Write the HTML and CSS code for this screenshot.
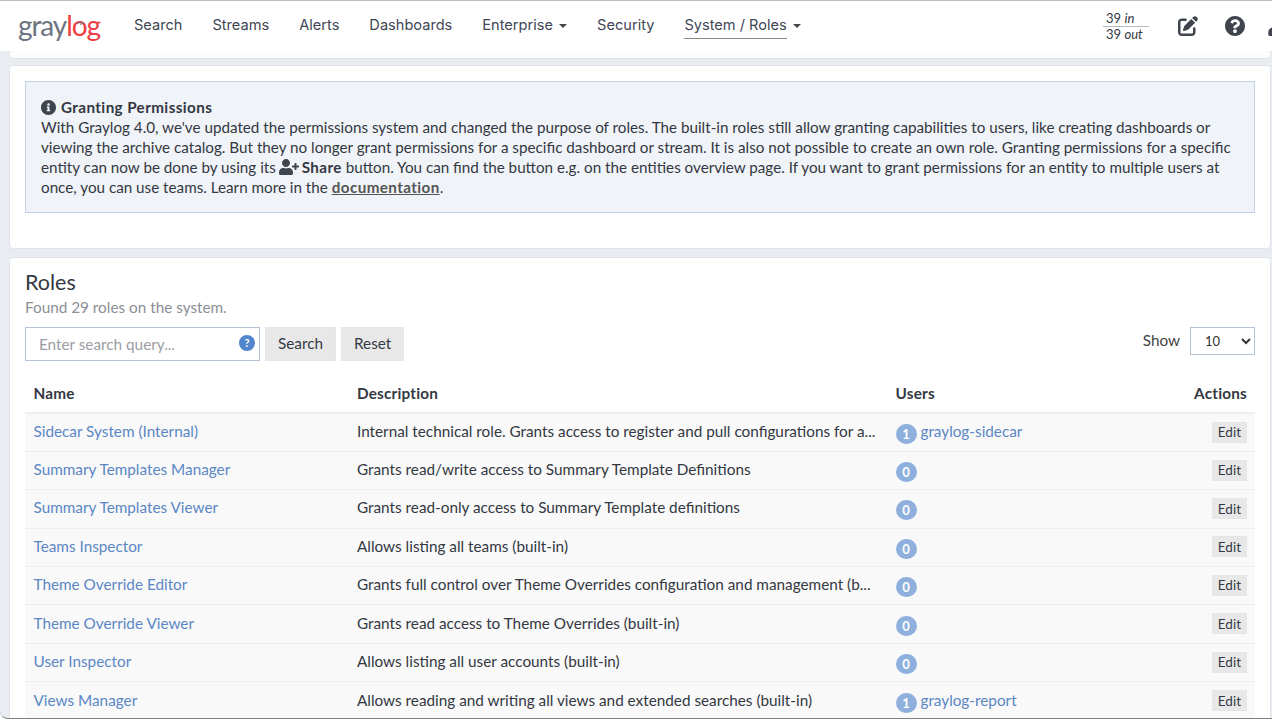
FILE: index.html
```html
<!DOCTYPE html>
<html lang="en">
<head>
<meta charset="utf-8">
<title>Roles - Graylog</title>
<link rel="stylesheet" href="styles.css">
</head>
<body>

<div class="app">
    <nav class="navbar">
        <a class="brand">gray<span class="brand_red">l<span class="brand_o">o<svg class="pulse" viewBox="0 0 12 8"><path d="M0 4.5h3l1.5-2 2 4 1.5-4 1 2h3"/></svg></span>g</span></a>
        <ul class="nav_links">
            <li>Search</li>
            <li>Streams</li>
            <li>Alerts</li>
            <li>Dashboards</li>
            <li>Enterprise <i class="caret"></i></li>
            <li>Security</li>
            <li><span class="active">System / Roles</span> <i class="caret"></i></li>
        </ul>
        <div class="nav_right">
            <div class="throughput">
                <div class="tp_in"><b>39</b> <em>in</em></div>
                <div><b>39</b> <em>out</em></div>
            </div>
            <svg class="nav_icon" viewBox="0 0 512 512"><path d="M471.6 21.7c-21.9-21.9-57.3-21.9-79.2 0L362.3 51.7l97.9 97.9 30.1-30.1c21.9-21.9 21.9-57.3 0-79.2L471.6 21.7zm-299.2 220c-6.1 6.1-10.8 13.6-13.5 21.9l-29.6 88.8c-2.9 8.6-.6 18.1 5.8 24.6s15.9 8.7 24.6 5.8l88.8-29.6c8.2-2.7 15.7-7.4 21.9-13.5L437.7 172.3 339.7 74.3 172.4 241.7zM96 64C43 64 0 107 0 160V416c0 53 43 96 96 96H352c53 0 96-43 96-96V320c0-17.7-14.3-32-32-32s-32 14.3-32 32v96c0 17.7-14.3 32-32 32H96c-17.7 0-32-14.3-32-32V160c0-17.7 14.3-32 32-32h96c17.7 0 32-14.3 32-32s-14.3-32-32-32H96z"/></svg>
            <svg class="nav_icon help_icon" viewBox="8 8 496 496"><path d="M504 256c0 136.997-111.043 248-248 248S8 392.997 8 256C8 119.083 119.043 8 256 8s248 111.083 248 248zM262.655 90c-54.497 0-89.255 22.957-116.549 63.758-3.536 5.286-2.353 12.415 2.715 16.258l34.699 26.31c5.205 3.947 12.621 3.008 16.665-2.122 17.864-22.658 30.113-35.797 57.303-35.797 20.429 0 45.698 13.148 45.698 32.958 0 14.976-12.363 22.667-32.534 33.976C247.128 238.528 216 254.941 216 296v4c0 6.627 5.373 12 12 12h56c6.627 0 12-5.373 12-12v-1.333c0-28.462 83.186-29.647 83.186-106.667 0-58.002-60.165-102-116.531-102zM256 338c-25.365 0-46 20.635-46 46 0 25.364 20.635 46 46 46s46-20.636 46-46c0-25.365-20.635-46-46-46z"/></svg>
            <svg class="nav_icon user_icon" viewBox="0 0 448 512"><path d="M224 256c70.7 0 128-57.3 128-128S294.7 0 224 0 96 57.3 96 128s57.3 128 128 128zm89.6 32h-16.7c-22.2 10.2-46.9 16-72.9 16s-50.6-5.8-72.9-16h-16.7C60.2 288 0 348.2 0 422.4V464c0 26.5 21.5 48 48 48h352c26.5 0 48-21.5 48-48v-41.6c0-74.2-60.2-134.4-134.4-134.4z"/></svg>
        </div>
    </nav>

    <div class="content">
        <div class="card card_stub"></div>

        <div class="card card_notice">
            <div class="alert">
                <div class="alert_title">
                    <svg class="info_icon" viewBox="8 8 496 496"><path d="M256 8C119.043 8 8 119.083 8 256c0 136.997 111.043 248 248 248s248-111.003 248-248C504 119.083 392.957 8 256 8zm0 110c23.196 0 42 18.804 42 42s-18.804 42-42 42-42-18.804-42-42 18.804-42 42-42zm56 254c0 6.627-5.373 12-12 12h-88c-6.627 0-12-5.373-12-12v-24c0-6.627 5.373-12 12-12h12v-64h-12c-6.627 0-12-5.373-12-12v-24c0-6.627 5.373-12 12-12h64c6.627 0 12 5.373 12 12v100h12c6.627 0 12 5.373 12 12v24z"/></svg>
                    <b>Granting Permissions</b>
                </div>
                With Graylog 4.0, we've updated the permissions system and changed the purpose of roles. The built-in roles still allow granting capabilities to users, like creating dashboards or<br>
                viewing the archive catalog. But they no longer grant permissions for a specific dashboard or stream. It is also not possible to create an own role. Granting permissions for a specific<br>
                entity can now be done by using its <svg class="share_icon" viewBox="0 0 640 512"><path d="M624 208h-64v-64c0-8.8-7.2-16-16-16h-32c-8.8 0-16 7.2-16 16v64h-64c-8.8 0-16 7.2-16 16v32c0 8.8 7.2 16 16 16h64v64c0 8.8 7.2 16 16 16h32c8.8 0 16-7.2 16-16v-64h64c8.8 0 16-7.2 16-16v-32c0-8.8-7.2-16-16-16zm-400 48c70.7 0 128-57.3 128-128S294.7 0 224 0 96 57.3 96 128s57.3 128 128 128zm89.6 32h-16.7c-22.2 10.2-46.9 16-72.9 16s-50.6-5.8-72.9-16h-16.7C60.2 288 0 348.2 0 422.4V464c0 26.5 21.5 48 48 48h352c26.5 0 48-21.5 48-48v-41.6c0-74.2-60.2-134.4-134.4-134.4z"/></svg> <b>Share</b> button. You can find the button e.g. on the entities overview page. If you want to grant permissions for an entity to multiple users at<br>
                once, you can use teams. Learn more in the <a class="doc_link">documentation</a>.
            </div>
        </div>

        <div class="card card_roles">
            <h2>Roles</h2>
            <p class="found">Found 29 roles on the system.</p>
            <div class="toolbar">
                <div class="search_box">
                    <input class="search_input" type="text" placeholder="Enter search query...">
                    <span class="search_help">?</span>
                </div>
                <button class="btn btn_search">Search</button>
                <button class="btn btn_reset">Reset</button>
                <label class="show_label">Show</label>
                <select class="show_select"><option>10</option></select>
            </div>

            <table class="roles_table">
                <thead>
                    <tr><th class="col_name">Name</th><th class="col_desc">Description</th><th class="col_users">Users</th><th class="col_actions">Actions</th></tr>
                </thead>
                <tbody>
                    <tr><td><a>Sidecar System (Internal)</a></td><td>Internal technical role. Grants access to register and pull configurations for a...</td><td><span class="badge">1</span> <a>graylog-sidecar</a></td><td class="col_actions"><button class="btn_edit">Edit</button></td></tr>
                    <tr><td><a>Summary Templates Manager</a></td><td>Grants read/write access to Summary Template Definitions</td><td><span class="badge">0</span></td><td class="col_actions"><button class="btn_edit">Edit</button></td></tr>
                    <tr><td><a>Summary Templates Viewer</a></td><td>Grants read-only access to Summary Template definitions</td><td><span class="badge">0</span></td><td class="col_actions"><button class="btn_edit">Edit</button></td></tr>
                    <tr><td><a>Teams Inspector</a></td><td>Allows listing all teams (built-in)</td><td><span class="badge">0</span></td><td class="col_actions"><button class="btn_edit">Edit</button></td></tr>
                    <tr><td><a>Theme Override Editor</a></td><td>Grants full control over Theme Overrides configuration and management (b...</td><td><span class="badge">0</span></td><td class="col_actions"><button class="btn_edit">Edit</button></td></tr>
                    <tr><td><a>Theme Override Viewer</a></td><td>Grants read access to Theme Overrides (built-in)</td><td><span class="badge">0</span></td><td class="col_actions"><button class="btn_edit">Edit</button></td></tr>
                    <tr><td><a>User Inspector</a></td><td>Allows listing all user accounts (built-in)</td><td><span class="badge">0</span></td><td class="col_actions"><button class="btn_edit">Edit</button></td></tr>
                    <tr><td><a>Views Manager</a></td><td>Allows reading and writing all views and extended searches (built-in)</td><td><span class="badge">1</span> <a>graylog-report</a></td><td class="col_actions"><button class="btn_edit">Edit</button></td></tr>
                </tbody>
            </table>
        </div>
    </div>
</div>

</body>
</html>
```

FILE: styles.css
```css
*,*:after,*:before{
	box-sizing: border-box;
}
html, body{
	height: 100%;
	overflow: hidden;
}
body{
	margin: 0;
	background: #fff;
	color: #333842;
	font-family: "Lato", "Liberation Sans", sans-serif;
	font-size: 15.3px;
	line-height: 20px;
}
a{
	color: #5b87c5;
}
.app{
	height: 719px;
	overflow: hidden;
	background: #e9ecf1;
	border-top: 1px solid #bdbdbd;
	border-bottom: 1px solid #808080;
	border-bottom-left-radius: 8px;
}

/* top bar */
.navbar{
	height: 50px;
	background: #fff;
	display: flex;
	align-items: center;
	padding-left: 18px;
	overflow: hidden;
}
.brand{
	width: 101px;
	flex: none;
	font-family: "Lato", sans-serif;
	font-size: 28px;
	letter-spacing: -1.1px;
	color: #6b7480;
	padding-bottom: 3px;
}
.brand_red{
	color: #ee3f45;
}
.brand_o{
	position: relative;
}
.pulse{
	position: absolute;
	left: 4px;
	top: 12px;
	width: 9px;
	height: 6px;
	fill: none;
	stroke: #6b7480;
	stroke-width: 1;
}
.nav_links{
	display: flex;
	list-style: none;
	margin: 0;
	padding: 2px 0 0;
	font-family: "Inter", sans-serif;
	font-size: 14.6px;
	color: #404654;
}
.nav_links li{
	padding: 0 15px;
	white-space: nowrap;
}
.active{
	display: inline-block;
	padding-bottom: 3px;
	border-bottom: 1px solid #888;
}
.caret{
	display: inline-block;
	border-top: 4px solid #444;
	border-left: 4px solid transparent;
	border-right: 4px solid transparent;
	margin-left: 2px;
	vertical-align: middle;
}
.nav_right{
	margin-left: auto;
	display: flex;
	align-items: center;
}
.throughput{
	width: 46px;
	font-size: 13px;
	line-height: 15px;
	margin-right: 29px;
	padding-left: 3px;
}
.throughput b{
	font-weight: 400;
}
.tp_in{
	margin-left: -3px;
	padding-left: 3px;
	border-bottom: 1px solid #b4b9c2;
}
.nav_icon{
	width: 20px;
	height: 20px;
	fill: #3f444d;
	flex: none;
}
.help_icon{
	margin-left: 27px;
}
.user_icon{
	margin-left: 23px;
	width: 18px;
	margin-right: -14px;
}

/* cards */
.content{
	padding: 0 1px 0 9px;
}
.card{
	background: #fff;
	border: 1px solid #dfe3ea;
	border-radius: 4px;
	margin-bottom: 8px;
}
.card_stub{
	height: 8px;
	border-top: 0;
	background: #fcfcfc;
	border-radius: 0 0 4px 4px;
	margin-bottom: 6px;
}
.card_notice{
	height: 184px;
	padding: 15px 15px 0 15px;
}
.alert{
	height: 132px;
	background: #f0f3f8;
	border: 1px solid #c3d2e6;
	padding: 15px;
	font-size: 15.22px;
	white-space: nowrap;
}
.alert_title{
	display: flex;
	align-items: center;
	gap: 5px;
}
.alert b{
	letter-spacing: 0.4px;
}
.info_icon{
	width: 15px;
	height: 15px;
	fill: #3f444d;
}
.share_icon{
	width: 20px;
	height: 16px;
	margin: 0 -1px 0 -1px;
	fill: #3f444d;
	vertical-align: -2px;
}
.doc_link{
	color: #555;
	font-weight: 700;
	letter-spacing: 0.4px;
	text-decoration: underline;
}

/* roles list */
.card_roles{
	padding: 0 15px;
	height: 480px;
}
h2{
	margin: 12px 0 0;
	font-size: 21.5px;
	font-weight: 400;
	line-height: 24px;
}
.found{
	margin: 3px 0 10px;
	color: #8c8f96;
}
.toolbar{
	display: flex;
	align-items: flex-start;
	height: 34px;
}
.search_box{
	width: 235px;
	height: 34px;
	border: 1px solid #b6c2d6;
	display: flex;
	align-items: center;
	margin-right: 5px;
	padding-right: 4px;
}
.search_input{
	border: 0;
	outline: 0;
	flex: 1;
	min-width: 0;
	padding-left: 13px;
	font: inherit;
	background: transparent;
}
.search_input::placeholder{
	color: #9a9da3;
}
.search_help{
	width: 16px;
	height: 16px;
	border-radius: 50%;
	background: #4f86cc;
	color: #fff;
	font-size: 11px;
	font-weight: 700;
	line-height: 16px;
	text-align: center;
	margin-bottom: 2px;
}
.btn{
	height: 34px;
	border: 1px solid #e6e6e6;
	background: #e8e8e8;
	color: #333a45;
	font: inherit;
	padding: 0 12px 2px;
	margin-right: 5px;
}
.show_label{
	margin-left: auto;
	margin-right: 10px;
	padding-top: 3px;
	color: #444;
}
.show_select{
	width: 65px;
	height: 28px;
	border: 1px solid #b6c2d6;
	background: #fff;
	color: #333;
	font-family: inherit;
	font-size: 13px;
	padding-left: 10px;
	border-radius: 0;
}
.roles_table{
	width: 100%;
	margin-top: 15px;
	border-collapse: collapse;
	table-layout: fixed;
}
.roles_table th{
	text-align: left;
	font-weight: 700;
	letter-spacing: 0.2px;
	padding: 0 8px 2px 8.5px;
	height: 37px;
	border-bottom: 2px solid #eee;
}
.col_name{
	width: 323.5px;
}
.col_desc{
	width: 538.5px;
}
.col_users{
	width: 240px;
}
.roles_table td{
	height: 38.4px;
	padding: 0 8px 3px 8.5px;
	background: #f9f9f9;
	border-top: 1px solid #eee;
	white-space: nowrap;
}
.roles_table .col_actions{
	text-align: right;
}
.badge{
	display: inline-block;
	width: 21px;
	height: 20px;
	margin: -4px 0;
	border-radius: 10px;
	background: #8fb0dd;
	color: #fff;
	font-size: 13px;
	font-weight: 700;
	line-height: 20px;
	text-align: center;
	vertical-align: -2px;
}
.btn_edit{
	height: 21px;
	margin-top: 1px;
	padding: 0 5px;
	border: 1px solid #e6e6e6;
	background: #e8e8e8;
	color: #333a45;
	font-family: inherit;
	font-size: 13.5px;
	line-height: 18px;
	vertical-align: middle;
}
```
